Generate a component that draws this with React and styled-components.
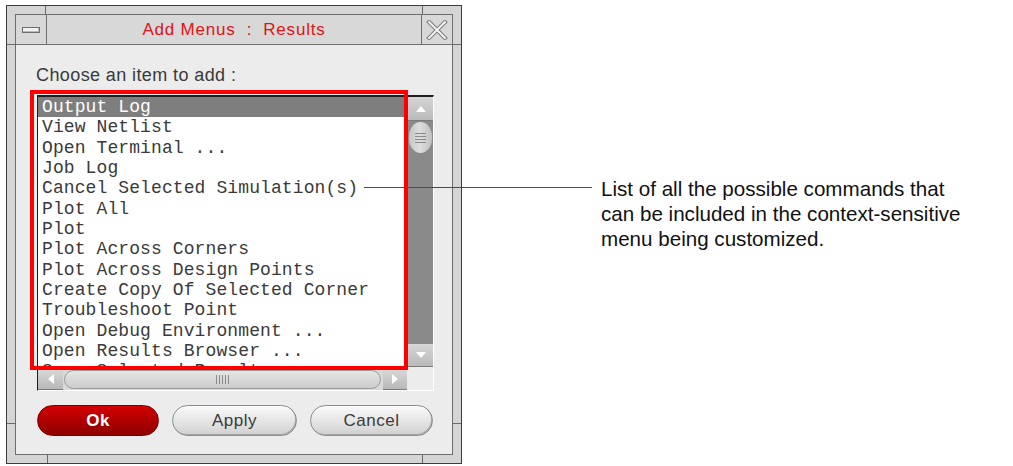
import React from 'react';
import styled, { createGlobalStyle } from 'styled-components';

const GlobalStyle = createGlobalStyle`
  html, body {
    margin: 0;
    padding: 0;
    background: #ffffff;
  }
  body {
    font-family: "Liberation Sans", Arial, sans-serif;
  }
`;

const Page = styled.div`
  position: relative;
  display: flex;
  align-items: flex-start;
  width: 1013px;
  height: 466px;
  padding: 5px 0 0 6px;
  box-sizing: border-box;
`;

const Window = styled.div`
  position: relative;
  box-sizing: border-box;
  width: 456px;
  height: 459px;
  border: 1px solid #3c3c3c;
  background: #d5d5d5;
  padding: 8px;
`;

/* little resize marks cut into the window frame */
const Tick = styled.span`
  position: absolute;
  background: #6a6a6a;
  ${(p) => (p.$vertical ? 'width: 1px; height: 8px;' : 'width: 8px; height: 1px;')}
`;

const Inner = styled.div`
  box-sizing: border-box;
  height: 100%;
  border: 1px solid #6e6e6e;
  display: flex;
  flex-direction: column;
  background: #ececec;
`;

const TitleBar = styled.div`
  display: flex;
  height: 29px;
  border-bottom: 1px solid #6e6e6e;
  background: #d8d8d8;
`;

const TitleButton = styled.div`
  width: ${(p) => p.$w}px;
  display: flex;
  align-items: center;
  justify-content: center;
  ${(p) => (p.$side === 'left' ? 'border-right: 1px solid #6e6e6e;' : 'border-left: 1px solid #6e6e6e;')}
`;

const MinBar = styled.span`
  width: 16px;
  height: 4px;
  border: 1px solid #6e6e6e;
  background: #f2f2f2;
  box-shadow: inset -1px -1px 0 #b8b8b8;
`;

const Title = styled.div`
  flex: 1;
  text-align: center;
  line-height: 29px;
  font-size: 17px;
  color: #e01414;
  letter-spacing: 0.8px;
  white-space: pre;
`;

const Content = styled.div`
  flex: 1;
  display: flex;
  flex-direction: column;
  padding: 20px 0 0 21px;
`;

const Label = styled.div`
  font-size: 18px;
  line-height: 20px;
  color: #3a3a3a;
  margin-left: -1px;
  letter-spacing: 0.4px;
`;

const ListFrame = styled.div`
  position: relative;
  margin-top: 10px;
  width: 397px;
  box-sizing: border-box;
  border-top: 2px solid #1e1e1e;
  border-left: 1px solid #1e1e1e;
  border-right: 1px solid #ffffff;
  border-bottom: 1px solid #ffffff;
  display: grid;
  grid-template-columns: 369px 26px;
  grid-template-rows: 270px 23px;
`;

const ListBox = styled.div`
  background: #ffffff;
  overflow: hidden;
`;

const Item = styled.div`
  height: 20.33px;
  line-height: 20.33px;
  padding-left: 4px;
  font-family: "Liberation Mono", "DejaVu Sans Mono", monospace;
  font-size: 18px;
  letter-spacing: 0.1px;
  white-space: pre;
  color: ${(p) => (p.$selected ? '#ffffff' : '#3a3a3a')};
  background: ${(p) => (p.$selected ? '#7e7e7e' : 'transparent')};
`;

const VScroll = styled.div`
  margin-left: 1px;
  display: flex;
  flex-direction: column;
  background: #8a8a8a;
`;

const ArrowButton = styled.div`
  flex: none;
  width: ${(p) => p.$w}px;
  height: ${(p) => p.$h}px;
  display: flex;
  align-items: center;
  justify-content: center;
  background: linear-gradient(#d6d6d6, #b9b9b9);
  border-bottom: 1px solid #7a7a7a;
  box-sizing: border-box;
`;

const VThumb = styled.div`
  margin: 1px 1px 0;
  height: 31px;
  border-radius: 12px / 15px;
  background: linear-gradient(90deg, #c4c4c4, #dedede 45%, #c0c0c0);
  display: flex;
  flex-direction: column;
  align-items: center;
  justify-content: center;
  gap: 2px;
`;

const Track = styled.div`
  flex: 1;
`;

const GripLine = styled.span`
  width: 11px;
  height: 1px;
  background: #8a8a8a;
`;

const HScroll = styled.div`
  display: flex;
  align-items: center;
  background: #d9d9d9;
  padding-top: 2px;
  box-sizing: border-box;
`;

const HThumb = styled.div`
  flex: 1;
  height: 19px;
  margin: 0 2px 0 1px;
  border-radius: 10px;
  border: 1px solid #9a9a9a;
  background: linear-gradient(#e6e6e6, #cbcbcb);
  display: flex;
  align-items: center;
  justify-content: center;
  gap: 2px;
  box-sizing: border-box;
`;

const VGrip = styled.span`
  width: 1px;
  height: 9px;
  background: #8a8a8a;
`;

const Corner = styled.div`
  background: #ececec;
`;

const Highlight = styled.div`
  position: absolute;
  left: -8px;
  top: -7px;
  width: 378px;
  height: 280px;
  border: 4px solid #ff0000;
  box-sizing: border-box;
  pointer-events: none;
`;

const ButtonRow = styled.div`
  display: flex;
  gap: 13px;
  margin-top: 14px;
`;

const PillButton = styled.div`
  box-sizing: border-box;
  width: ${(p) => p.$w}px;
  height: 31px;
  border-radius: 16px;
  display: flex;
  align-items: center;
  justify-content: center;
  font-size: 17px;
  letter-spacing: 0.5px;
  ${(p) =>
    p.$primary
      ? `
    background: linear-gradient(#d40000, #a80000 60%, #8e0000);
    color: #ffffff;
    font-weight: bold;
    border: 1px solid #7a0000;
  `
      : `
    background: linear-gradient(#fafafa, #dedede 70%, #cfcfcf);
    color: #3a3a3a;
    border: 1px solid #8c8c8c;
    box-shadow: inset -1px -1px 0 #a8a8a8;
  `}
`;

const Leader = styled.div`
  position: absolute;
  left: 364px;
  top: 187px;
  width: 228px;
  border-top: 1px solid #ff0000;
`;

const Note = styled.div`
  margin: 171px 0 0 139px;
  font-size: 20.6px;
  line-height: 25px;
  color: #111111;
  white-space: nowrap;
`;

const items = [
  'Output Log',
  'View Netlist',
  'Open Terminal ...',
  'Job Log',
  'Cancel Selected Simulation(s)',
  'Plot All',
  'Plot',
  'Plot Across Corners',
  'Plot Across Design Points',
  'Create Copy Of Selected Corner',
  'Troubleshoot Point',
  'Open Debug Environment ...',
  'Open Results Browser ...',
  'Save Selected Results',
];

const Triangle = ({ dir }) => {
  const pts = {
    up: '1,9 6,3 11,9',
    down: '1,3 6,9 11,3',
    left: '9,1 3,6 9,11',
    right: '3,1 9,6 3,11',
  }[dir];
  return (
    <svg width="12" height="12" viewBox="0 0 12 12">
      <polygon points={pts} fill="#ffffff" />
    </svg>
  );
};

const CloseGlyph = () => (
  <svg width="22" height="20" viewBox="0 0 22 20">
    <path d="M3 2 L19 18 M19 2 L3 18" stroke="#7a7a7a" strokeWidth="4" strokeLinecap="square" />
    <path d="M3 2 L19 18 M19 2 L3 18" stroke="#f4f4f4" strokeWidth="2" strokeLinecap="square" />
  </svg>
);

export default function App() {
  return (
    <>
      <GlobalStyle />
      <Page>
        <Window>
          <Tick $vertical style={{ left: 38, top: 0 }} />
          <Tick $vertical style={{ left: 415, top: 0 }} />
          <Tick style={{ left: 0, top: 38 }} />
          <Tick style={{ right: 0, top: 38 }} />
          <Tick $vertical style={{ left: 40, bottom: 0 }} />
          <Tick $vertical style={{ left: 415, bottom: 0 }} />
          <Tick style={{ left: 0, bottom: 39 }} />
          <Tick style={{ right: 0, bottom: 39 }} />
          <Inner>
            <TitleBar>
              <TitleButton $w={30} $side="left">
                <MinBar />
              </TitleButton>
              <Title>Add Menus  :  Results</Title>
              <TitleButton $w={30} $side="right">
                <CloseGlyph />
              </TitleButton>
            </TitleBar>
            <Content>
              <Label>Choose an item to add :</Label>
              <ListFrame>
                <ListBox>
                  {items.map((t, i) => (
                    <Item key={t} $selected={i === 0}>
                      {t}
                    </Item>
                  ))}
                </ListBox>
                <VScroll>
                  <ArrowButton $w={25} $h={24}>
                    <Triangle dir="up" />
                  </ArrowButton>
                  <VThumb>
                    <GripLine />
                    <GripLine />
                    <GripLine />
                    <GripLine />
                  </VThumb>
                  <Track />
                  <ArrowButton $w={25} $h={23}>
                    <Triangle dir="down" />
                  </ArrowButton>
                </VScroll>
                <HScroll>
                  <ArrowButton $w={25} $h={20}>
                    <Triangle dir="left" />
                  </ArrowButton>
                  <HThumb>
                    <VGrip />
                    <VGrip />
                    <VGrip />
                    <VGrip />
                    <VGrip />
                  </HThumb>
                  <ArrowButton $w={24} $h={20}>
                    <Triangle dir="right" />
                  </ArrowButton>
                </HScroll>
                <Corner />
                <Highlight />
              </ListFrame>
              <ButtonRow>
                <PillButton $w={122} $primary>
                  Ok
                </PillButton>
                <PillButton $w={125}>Apply</PillButton>
                <PillButton $w={123}>Cancel</PillButton>
              </ButtonRow>
            </Content>
          </Inner>
        </Window>
        <Note>
          List of all the possible commands that
          <br />
          can be included in the context-sensitive
          <br />
          menu being customized.
        </Note>
        <Leader />
      </Page>
    </>
  );
}
